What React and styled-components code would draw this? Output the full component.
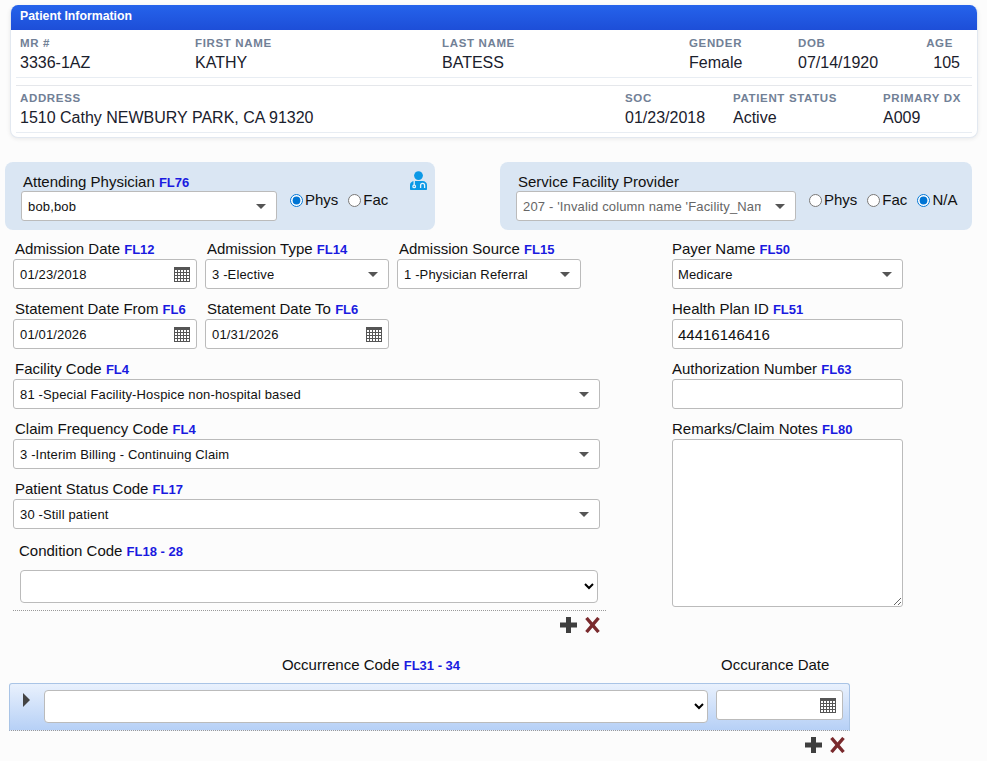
import React from 'react';
import styled, { createGlobalStyle } from 'styled-components';

const GlobalStyle = createGlobalStyle`
  html, body {
    margin: 0;
    padding: 0;
    background: #fcfcfc;
    font-family: 'Liberation Sans', Arial, sans-serif;
    color: #111;
  }
  * {
    box-sizing: border-box;
  }
`;

const Page = styled.div`
  width: 987px;
  height: 761px;
  overflow: hidden;
  padding-top: 5px;
`;

const Card = styled.section`
  width: 968px;
  height: 133px;
  margin-left: 10px;
  background: #fff;
  border: 1px solid #e2e8f0;
  border-top: 0;
  border-radius: 8px;
  box-shadow: 0 1px 4px rgba(0, 0, 0, 0.08);
  overflow: hidden;
`;

const CardHeader = styled.h2`
  height: 25px;
  margin: 0;
  padding: 0 9px;
  background: linear-gradient(180deg, #2563eb 0%, #1d4ed8 100%);
  color: #fff;
  font-size: 12.3px;
  font-weight: bold;
  line-height: 23px;
`;

const InfoRow = styled.div`
  display: grid;
  grid-template-columns: ${({ $columns }) => $columns};
  height: 48px;
  margin: ${({ $top }) => $top}px 5px 0;
  padding: ${({ $pad }) => $pad}px 4px 0;
  border-top: ${({ $ruled }) => ($ruled ? '1px solid #e5e7eb' : '0')};
  border-bottom: 1px solid #e8edf3;
`;

const InfoCell = styled.div`
  text-align: ${({ $right }) => ($right ? 'right' : 'left')};
`;

const InfoLabel = styled.div`
  height: 13px;
  padding-right: ${({ $inset }) => ($inset ? '7px' : '0')};
  color: #718096;
  font-size: 11.5px;
  font-weight: bold;
  letter-spacing: 0.65px;
  line-height: 13px;
  white-space: nowrap;
`;

const InfoValue = styled.div`
  margin-top: 3px;
  color: #1a202c;
  font-size: 16px;
  line-height: 19px;
`;

const ProviderRow = styled.div`
  display: flex;
  gap: 65px;
  margin: 24px 0 0 5px;
`;

const ProviderPanel = styled.div`
  position: relative;
  width: ${({ $width }) => $width}px;
  height: 68px;
  padding: 10px 0 0 16px;
  background: #dae6f3;
  border-radius: 8px;
`;

const ProviderLabel = styled.div`
  height: 19px;
  padding-left: 2px;
  font-size: 15px;
  line-height: 19px;
`;

const ProviderControls = styled.div`
  display: flex;
  align-items: center;
  gap: 13px;
`;

const DoctorBadge = styled.svg`
  position: absolute;
  top: 9px;
  right: 8px;
  width: 17px;
  height: 19px;
`;

const RadioGroup = styled.div`
  display: flex;
  gap: 10px;
  margin-top: -12px;
`;

const RadioLabel = styled.label`
  display: flex;
  align-items: center;
  gap: 2px;
  font-size: 15px;
  line-height: 18px;
`;

const Radio = styled.input.attrs({ type: 'radio' })`
  width: 13px;
  height: 13px;
  margin: 0;
  accent-color: #0075d4;
`;

const FormArea = styled.div`
  display: flex;
  gap: 67px;
  margin: 10px 0 0 13px;
`;

const LeftColumn = styled.div`
  width: 592px;
`;

const FieldRow = styled.div`
  display: flex;
  gap: 8px;
`;

const Field = styled.div`
  width: ${({ $width }) => ($width ? `${$width}px` : '100%')};
  height: 60px;
`;

const Label = styled.div`
  height: 19px;
  padding-left: 2px;
  font-size: 15px;
  line-height: 18px;
  white-space: nowrap;
`;

const Tag = styled.span`
  color: #1a1ae0;
  font-size: 13px;
  font-weight: bold;
`;

const BoxBase = styled.div`
  position: relative;
  width: ${({ $width }) => ($width ? `${$width}px` : '100%')};
  height: 30px;
  background: #fff;
  border: 1px solid #bbb;
  border-radius: 3px;
`;

const DropBox = styled(BoxBase)`
  display: flex;
  align-items: center;
  padding: 0 34px 0 6px;
  color: ${({ $muted }) => ($muted ? '#666' : '#111')};
  font-size: 13px;
  letter-spacing: 0.15px;
  white-space: nowrap;

  > span {
    overflow: hidden;
  }

  &::after {
    content: '';
    position: absolute;
    top: 12px;
    right: 10px;
    border-style: solid;
    border-width: 5px 5px 0;
    border-color: #555 transparent transparent;
  }
`;

const DateBox = styled(BoxBase)`
  display: flex;
  align-items: center;
  justify-content: space-between;
  padding: 0 6px;
  font-size: 13px;
  letter-spacing: 0.15px;
`;

const TextBox = styled(BoxBase)`
  display: flex;
  align-items: center;
  padding: 0 6px;
  font-size: 15px;
`;

const RightColumn = styled.div`
  width: 231px;

  ${Label} {
    padding-left: 0;
  }

  ${DropBox}, ${TextBox} {
    padding-left: 5px;
  }
`;

const NotesBox = styled.textarea`
  display: block;
  width: 231px;
  height: 168px;
  background: #fff;
  border: 1px solid #bbb;
  border-radius: 3px;
  outline: none;
`;

const ConditionLabel = styled(Label)`
  height: 28px;
  margin-top: 2px;
  padding-left: 6px;
`;

const NativeSelect = styled.select`
  display: block;
  width: ${({ $width }) => $width}px;
  height: 33px;
  margin-left: ${({ $indent }) => $indent || 0}px;
  background: #fff;
  border: 1px solid #bbb;
  border-radius: 4px;
  outline: none;
`;

const DottedRule = styled.div`
  width: 593px;
  margin-top: 7px;
  border-top: 1px dotted #999;
`;

const ActionRow = styled.div`
  display: flex;
  justify-content: flex-end;
  gap: 8px;
  width: ${({ $width }) => $width}px;
  margin-top: 6px;
  margin-left: ${({ $indent }) => $indent || 0}px;
`;

const OccurrenceHeader = styled.div`
  display: flex;
  margin: 23px 0 0 34px;
  height: 27px;
  font-size: 15px;
  line-height: 18px;
`;

const OccurrenceTitle = styled.div`
  width: 674px;
  text-align: center;
  white-space: nowrap;
`;

const OccurrenceDateTitle = styled.div`
  padding-left: 13px;
  white-space: nowrap;
`;

const OccurrenceRow = styled.div`
  display: flex;
  width: 841px;
  height: 48px;
  margin-left: 9px;
  padding: 6px 6px 0 0;
  background: linear-gradient(180deg, #e9f1fd 0%, #b6d0f6 100%);
  border: 1px solid #a9c4e6;
  border-bottom: 1px dotted #999;
  border-radius: 3px 3px 0 0;
`;

const ExpandCell = styled.div`
  width: 34px;
  flex: none;
  padding: 3px 0 0 13px;

  &::before {
    content: '';
    display: block;
    border-style: solid;
    border-width: 7px 0 7px 7px;
    border-color: transparent transparent transparent #444;
    width: 0;
  }
`;

const OccurrenceDate = styled(BoxBase)`
  display: flex;
  align-items: center;
  justify-content: flex-end;
  margin-left: 8px;
  padding: 0 6px;
`;

const DoctorIcon = () => (
  <DoctorBadge viewBox="0 0 17 19">
    <circle cx="8.5" cy="4.6" r="4.4" fill="#0c99e6" />
    <path d="M0 18v-4.2C0 11.6 2 10.2 4.4 10h8.2c2.4.2 4.4 1.6 4.4 3.8V18c0 .6-.4 1-1 1H1c-.6 0-1-.4-1-1z" fill="#0c99e6" />
    <g fill="none" stroke="#e8f3fb" strokeWidth="1.3">
      <path d="M4.2 10v4" />
      <circle cx="4.2" cy="15.4" r="1.3" />
      <path d="M10.6 17v-2.6c0-1.2 1-2 2-2s2 .8 2 2V17" />
    </g>
  </DoctorBadge>
);

const CalendarIcon = () => (
  <svg width="16" height="15" viewBox="0 0 16 15">
    <rect x="0" y="0" width="16" height="15" fill="#555" />
    <g fill="#fff">
      {[3, 6, 9, 12].map((y) =>
        [1, 4, 7, 10, 13].map((x) => <rect key={`${x}-${y}`} x={x} y={y} width="2" height="2" />)
      )}
    </g>
  </svg>
);

const PlusIcon = () => (
  <svg width="17" height="16" viewBox="0 0 17 16">
    <path d="M6 0h5v5.5h6v5h-6V16H6v-5.500H0v-5h6z" fill="#3f3f3f" />
  </svg>
);

const CloseIcon = () => (
  <svg width="15" height="16" viewBox="0 0 15 16">
    <path d="M1.500 1L13.500 15M13.500 1L1.500 15" stroke="#7a2a2d" strokeWidth="3.400" />
  </svg>
);

const Drop = ({ label, tag, value, width }) => (
  <Field $width={width}>
    <Label>
      {label} <Tag>{tag}</Tag>
    </Label>
    <DropBox>
      <span>{value}</span>
    </DropBox>
  </Field>
);

const DateField = ({ label, tag, value }) => (
  <Field $width={184}>
    <Label>
      {label} <Tag>{tag}</Tag>
    </Label>
    <DateBox>
      <span>{value}</span>
      <CalendarIcon />
    </DateBox>
  </Field>
);

const Info = ({ label, value, right }) => (
  <InfoCell $right={right}>
    <InfoLabel $inset={right}>{label}</InfoLabel>
    <InfoValue>{value}</InfoValue>
  </InfoCell>
);

const App = () => (
  <Page>
    <GlobalStyle />
    <Card>
      <CardHeader>Patient Information</CardHeader>
      <InfoRow $columns="175px 247px 247px 109px 127px 35px" $pad={7} $top={0}>
        <Info label="MR #" value="3336-1AZ" />
        <Info label="FIRST NAME" value="KATHY" />
        <Info label="LAST NAME" value="BATESS" />
        <Info label="GENDER" value="Female" />
        <Info label="DOB" value="07/14/1920" />
        <Info label="AGE" value="105" right />
      </InfoRow>
      <InfoRow $columns="605px 108px 150px 90px" $pad={6} $top={7} $ruled>
        <Info label="ADDRESS" value="1510 Cathy NEWBURY PARK, CA 91320" />
        <Info label="SOC" value="01/23/2018" />
        <Info label="PATIENT STATUS" value="Active" />
        <Info label="PRIMARY DX" value="A009" />
      </InfoRow>
    </Card>

    <ProviderRow>
      <ProviderPanel $width={430}>
        <ProviderLabel>
          Attending Physician <Tag>FL76</Tag>
        </ProviderLabel>
        <ProviderControls>
          <DropBox $width={256}>
            <span>bob,bob</span>
          </DropBox>
          <RadioGroup>
            <RadioLabel>
              <Radio name="attending" defaultChecked />
              Phys
            </RadioLabel>
            <RadioLabel>
              <Radio name="attending" />
              Fac
            </RadioLabel>
          </RadioGroup>
        </ProviderControls>
        <DoctorIcon />
      </ProviderPanel>
      <ProviderPanel $width={472}>
        <ProviderLabel>Service Facility Provider</ProviderLabel>
        <ProviderControls>
          <DropBox $width={280} $muted>
            <span>207 - 'Invalid column name 'Facility_Name'</span>
          </DropBox>
          <RadioGroup>
            <RadioLabel>
              <Radio name="facility" />
              Phys
            </RadioLabel>
            <RadioLabel>
              <Radio name="facility" />
              Fac
            </RadioLabel>
            <RadioLabel>
              <Radio name="facility" defaultChecked />
              N/A
            </RadioLabel>
          </RadioGroup>
        </ProviderControls>
      </ProviderPanel>
    </ProviderRow>

    <FormArea>
      <LeftColumn>
        <FieldRow>
          <DateField label="Admission Date" tag="FL12" value="01/23/2018" />
          <Drop label="Admission Type" tag="FL14" value="3 -Elective" width={184} />
          <Drop label="Admission Source" tag="FL15" value="1 -Physician Referral" width={184} />
        </FieldRow>
        <FieldRow>
          <DateField label="Statement Date From" tag="FL6" value="01/01/2026" />
          <DateField label="Statement Date To" tag="FL6" value="01/31/2026" />
        </FieldRow>
        <Drop
          label="Facility Code"
          tag="FL4"
          value="81 -Special Facility-Hospice non-hospital based"
          width={587}
        />
        <Drop
          label="Claim Frequency Code"
          tag="FL4"
          value="3 -Interim Billing - Continuing Claim"
          width={587}
        />
        <Drop label="Patient Status Code" tag="FL17" value="30 -Still patient" width={587} />
        <ConditionLabel>
          Condition Code <Tag>FL18 - 28</Tag>
        </ConditionLabel>
        <NativeSelect $width={578} $indent={7}>
          <option />
        </NativeSelect>
        <DottedRule />
        <ActionRow $width={587}>
          <PlusIcon />
          <CloseIcon />
        </ActionRow>
      </LeftColumn>

      <RightColumn>
        <Field>
          <Label>
            Payer Name <Tag>FL50</Tag>
          </Label>
          <DropBox>
            <span>Medicare</span>
          </DropBox>
        </Field>
        <Field>
          <Label>
            Health Plan ID <Tag>FL51</Tag>
          </Label>
          <TextBox>44416146416</TextBox>
        </Field>
        <Field>
          <Label>
            Authorization Number <Tag>FL63</Tag>
          </Label>
          <TextBox />
        </Field>
        <Label>
          Remarks/Claim Notes <Tag>FL80</Tag>
        </Label>
        <NotesBox />
      </RightColumn>
    </FormArea>

    <OccurrenceHeader>
      <OccurrenceTitle>
        Occurrence Code <Tag>FL31 - 34</Tag>
      </OccurrenceTitle>
      <OccurrenceDateTitle>Occurance Date</OccurrenceDateTitle>
    </OccurrenceHeader>
    <OccurrenceRow>
      <ExpandCell />
      <NativeSelect $width={664}>
        <option />
      </NativeSelect>
      <OccurrenceDate $width={127}>
        <CalendarIcon />
      </OccurrenceDate>
    </OccurrenceRow>
    <ActionRow $width={836} $indent={9}>
      <PlusIcon />
      <CloseIcon />
    </ActionRow>
  </Page>
);

export default App;
